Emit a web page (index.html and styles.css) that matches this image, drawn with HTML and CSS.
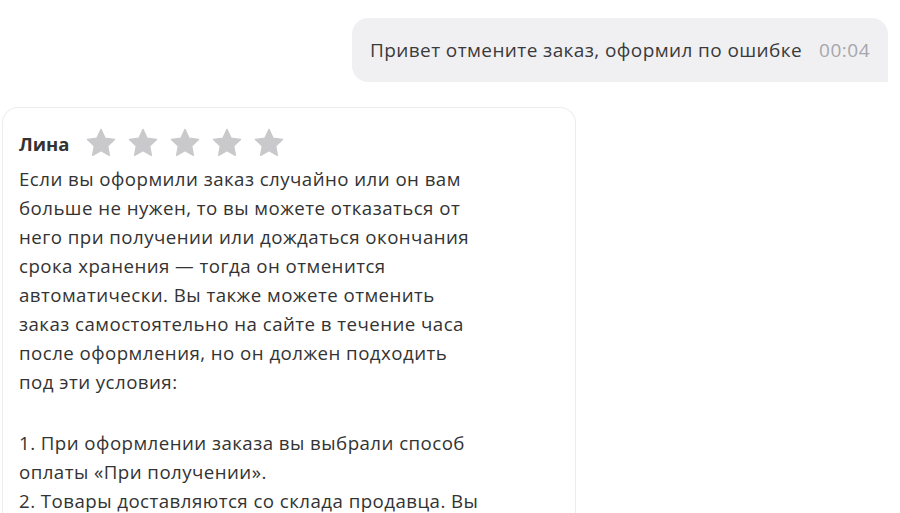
FILE: index.html
```html
<!DOCTYPE html>
<html lang="ru">
<head>
<meta charset="utf-8">
<link rel="stylesheet" href="styles.css">
</head>
<body>
<div class="chat">
  <div class="row-out">
    <div class="bubble-out">
      <span class="msg">Привет отмените заказ, оформил по ошибке</span>
      <span class="time">00:04</span>
    </div>
  </div>
  <div class="bubble-in">
    <div class="head">
      <span class="name">Лина</span>
      <div class="stars">
        <svg class="star" viewBox="0 0 24 24"><path d="M12 1.8l3.1 6.6 7.1.9-5.2 4.9 1.3 7.1L12 17.8l-6.3 3.5 1.3-7.1-5.2-4.9 7.1-.9z" stroke-linejoin="round"/></svg>
        <svg class="star" viewBox="0 0 24 24"><path d="M12 1.8l3.1 6.6 7.1.9-5.2 4.9 1.3 7.1L12 17.8l-6.3 3.5 1.3-7.1-5.2-4.9 7.1-.9z" stroke-linejoin="round"/></svg>
        <svg class="star" viewBox="0 0 24 24"><path d="M12 1.8l3.1 6.6 7.1.9-5.2 4.9 1.3 7.1L12 17.8l-6.3 3.5 1.3-7.1-5.2-4.9 7.1-.9z" stroke-linejoin="round"/></svg>
        <svg class="star" viewBox="0 0 24 24"><path d="M12 1.8l3.1 6.6 7.1.9-5.2 4.9 1.3 7.1L12 17.8l-6.3 3.5 1.3-7.1-5.2-4.9 7.1-.9z" stroke-linejoin="round"/></svg>
        <svg class="star" viewBox="0 0 24 24"><path d="M12 1.8l3.1 6.6 7.1.9-5.2 4.9 1.3 7.1L12 17.8l-6.3 3.5 1.3-7.1-5.2-4.9 7.1-.9z" stroke-linejoin="round"/></svg>
      </div>
    </div>
    <p class="text">Если вы оформили заказ случайно или он вам<br>больше не нужен, то вы можете отказаться от<br>него при получении или дождаться окончания<br>срока хранения — тогда он отменится<br>автоматически. Вы также можете отменить<br>заказ самостоятельно на сайте в течение часа<br>после оформления, но он должен подходить<br>под эти условия:</p>
    <p class="text list">1. При оформлении заказа вы выбрали способ<br>оплаты «При получении».<br>2. Товары доставляются со склада продавца. Вы</p>
  </div>
</div>
</body>
</html>
```

FILE: styles.css
```css
html, body {
  margin: 0;
  padding: 0;
  background: #ffffff;
  overflow: hidden;
}

.chat {
  font-family: "Open Sans", "Noto Sans", sans-serif;
  color: #333333;
  height: 513px;
  overflow: hidden;
}

.row-out {
  display: flex;
  justify-content: flex-end;
  padding: 18px 12px 0 0;
}

.bubble-out {
  display: flex;
  align-items: center;
  gap: 17px;
  height: 64px;
  box-sizing: border-box;
  padding: 0 18px 0 18px;
  background: #f0f0f3;
  border-radius: 16px 16px 0 16px;
}

.msg {
  font-size: 19px;
  letter-spacing: 0.4px;
  color: #3a3a3a;
}

.time {
  font-size: 19px;
  letter-spacing: 0.5px;
  color: #a6a6ab;
}

.bubble-in {
  margin: 25px 0 0 2px;
  width: 574px;
  box-sizing: border-box;
  border: 1px solid #ececee;
  border-bottom: none;
  border-radius: 16px 16px 0 0;
  padding: 19px 16px 0 16px;
  height: 420px;
}

.head {
  display: flex;
  align-items: center;
  height: 32px;
}

.name {
  font-weight: 700;
  font-size: 18.5px;
  color: #333333;
  width: 66px;
}

.stars {
  display: flex;
  gap: 10px;
}

.star {
  width: 32px;
  height: 32px;
  fill: #c9c9cc;
  stroke: #c9c9cc;
  stroke-width: 1;
}

.text {
  margin: 5px 0 0 0;
  font-size: 18.7px;
  letter-spacing: 0.45px;
  line-height: 29px;
  color: #333333;
  white-space: nowrap;
}

.text.list {
  margin-top: 32px;
}
```
